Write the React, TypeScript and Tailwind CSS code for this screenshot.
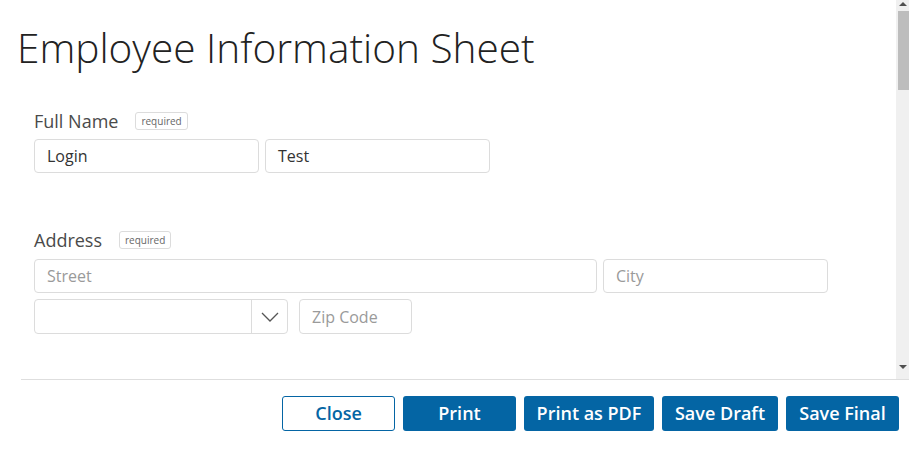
import React from "react";

const blue = "bg-[#0465a4]";

function Badge() {
  return (
    <span className="ml-[17px] inline-flex h-[18px] items-center rounded-[3px] border border-[#dcdcdc] px-[5px] text-[10px] leading-none text-[#666]">
      required
    </span>
  );
}

function Field({ value, placeholder, w }: { value?: string; placeholder?: string; w: string }) {
  return (
    <div className={`flex h-[34px] items-center rounded-[4px] border border-[#dcdcdc] px-[12px] text-[16px] ${w}`}>
      {value ? <span className="text-[#333]">{value}</span> : <span className="text-[#9a9a9a]">{placeholder}</span>}
    </div>
  );
}

export default function App() {
  return (
    <div className="relative h-[459px] w-[920px] bg-white font-['Open_Sans',sans-serif]">
      <div className="w-[909px]">
        {/* form area */}
        <div className="h-[379px] overflow-hidden">
          <h1 className="pl-[17px] pt-[28px] text-[40.6px] font-light leading-[40px] text-[#222]">
            Employee Information Sheet
          </h1>

          <div className="pl-[34px]">
            <div className="mt-[41px] flex h-[24px] items-center text-[18px] text-[#4a4a4a]">
              Full Name
              <Badge />
            </div>
            <div className="mt-[6px] flex gap-[6px]">
              <Field value="Login" w="w-[225px]" />
              <Field value="Test" w="w-[225px]" />
            </div>

            <div className="mt-[55px] flex h-[24px] items-center text-[18px] text-[#4a4a4a]">
              Address
              <Badge />
            </div>
            <div className="mt-[7px] flex gap-[6px]">
              <Field placeholder="Street" w="w-[563px]" />
              <Field placeholder="City" w="w-[225px]" />
            </div>
            <div className="mt-[6px] flex gap-[11px]">
              <div className="flex h-[35px] w-[254px] rounded-[4px] border border-[#dcdcdc]">
                <div className="flex-1" />
                <div className="flex w-[36px] items-center justify-center border-l border-[#dcdcdc]">
                  <svg width="18" height="10" viewBox="0 0 18 10" fill="none">
                    <polyline points="1,1 9,9 17,1" stroke="#555" strokeWidth="1.3" />
                  </svg>
                </div>
              </div>
              <Field placeholder="Zip Code" w="w-[113px] h-[35px]" />
            </div>
          </div>
        </div>

        {/* footer */}
        <div className="ml-[21px] flex justify-end gap-[8px] border-t border-[#dedede] pr-[10px] pt-[16px]">
          <button className="h-[35px] w-[113px] rounded-[3px] border border-[#0465a4] bg-white text-[18px] font-semibold text-[#0465a4]">
            Close
          </button>
          <button className={`h-[35px] w-[113px] rounded-[3px] ${blue} text-[18px] font-semibold text-white`}>Print</button>
          <button className={`h-[35px] w-[130px] rounded-[3px] ${blue} text-[18px] font-semibold text-white`}>
            Print as PDF
          </button>
          <button className={`h-[35px] w-[116px] rounded-[3px] ${blue} text-[18px] font-semibold text-white`}>
            Save Draft
          </button>
          <button className={`h-[35px] w-[113px] rounded-[3px] ${blue} text-[18px] font-semibold text-white`}>
            Save Final
          </button>
        </div>
      </div>

      {/* scrollbar */}
      <div className="absolute left-[896px] top-0 h-[379px] w-[13px] bg-[#f0f0f0]">
        <div className="ml-[2px] mt-[11px] h-[79px] w-[11px] bg-[#bdbdbd]" />
        <div className="absolute left-[3px] top-[2px] h-0 w-0 border-x-[4px] border-b-[4px] border-x-transparent border-b-[#505050]" />
        <div className="absolute left-[3px] top-[365px] h-0 w-0 border-x-[4px] border-t-[4px] border-x-transparent border-t-[#505050]" />
      </div>
    </div>
  );
}
